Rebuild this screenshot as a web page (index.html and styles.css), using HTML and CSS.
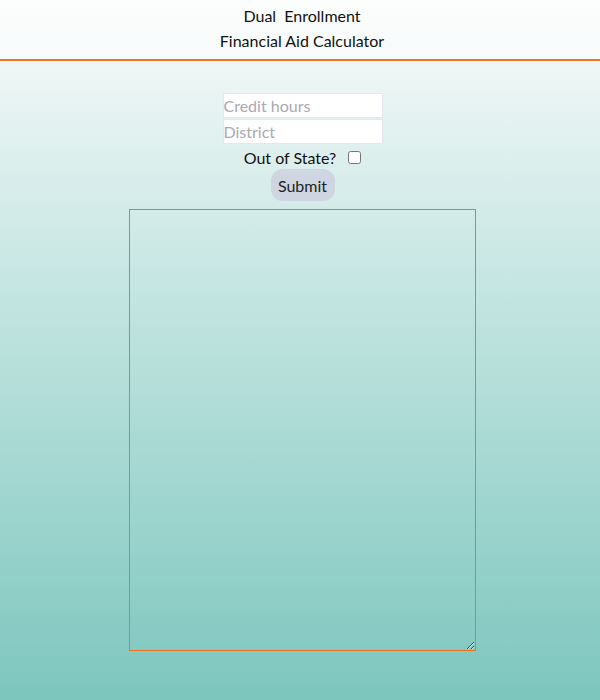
FILE: index.html
```html
<!DOCTYPE html>
<html>
<head>
<meta charset="utf-8">
<link rel="stylesheet" href="styles.css">
</head>
<body>
<header class="top">
  <div class="title">Dual &nbsp;Enrollment</div>
  <div class="title">Financial Aid Calculator</div>
</header>
<main class="calc">
  <input class="field" type="text" placeholder="Credit hours">
  <input class="field" type="text" placeholder="District">
  <label class="state">Out of State? <input class="check" type="checkbox"></label>
  <button class="submit">Submit</button>
  <textarea class="output"></textarea>
</main>
</body>
</html>
```
FILE: styles.css
```css
html, body {
  margin: 0;
  height: 100%;
}
body {
  background: linear-gradient(to bottom, #f9fbfb 0%, #edf6f5 10%, #c6e6e2 40%, #7cc6be 100%);
  font-family: Lato, "Open Sans", sans-serif;
  color: #111;
}
.top {
  height: 56px;
  border-bottom: 2px solid #f47521;
  background: rgba(255,255,255,0.5);
  display: flex;
  flex-direction: column;
  align-items: center;
  padding-top: 3px;
  padding-left: 4px;
}
.title {
  font-size: 16px;
  line-height: 25px;
}
.calc {
  display: flex;
  flex-direction: column;
  align-items: center;
  padding-top: 32px;
  padding-left: 5px;
}
.field {
  box-sizing: border-box;
  width: 160px;
  height: 25px;
  margin: 0 0 1px 0;
  border: 1px solid #e6e6ec;
  background: #fff;
  font-family: inherit;
  font-size: 16px;
  padding: 0;
  outline: none;
}
.field::placeholder {
  color: #a9a9b4;
}
.state {
  height: 24px;
  display: flex;
  align-items: center;
  font-size: 16px;
  gap: 12px;
}
.check {
  width: 13px;
  height: 13px;
  margin: 0;
}
.submit {
  width: 64px;
  height: 32px;
  border: none;
  border-radius: 12px;
  background: #cfd5e1;
  color: #222;
  font-family: inherit;
  font-size: 16px;
  padding: 0;
}
.output {
  box-sizing: border-box;
  margin-top: 8px;
  width: 347px;
  height: 442px;
  border: 1px solid #f07222;
  background: transparent;
  resize: both;
}
```
